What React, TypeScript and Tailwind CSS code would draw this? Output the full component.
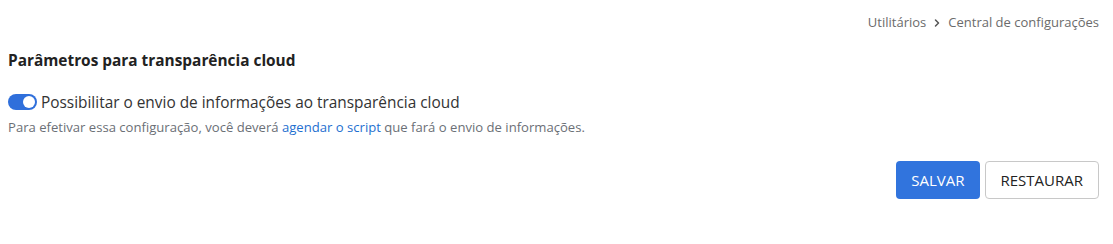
import { ChevronRight } from "lucide-react"

export default function App() {
  return (
    <div className="w-[1113px] h-[244px] bg-white px-2 font-['Open_Sans',sans-serif]">
      {/* Breadcrumb */}
      <div className="flex justify-end items-center pt-[13px] pr-[6px] text-[13px] text-[#6b6b6b]">
        <span>Utilitários</span>
        <ChevronRight className="w-3 h-3 mx-[5px] text-[#555]" strokeWidth={3} />
        <span>Central de configurações</span>
      </div>

      <h2 className="mt-[16px] text-[15.4px] font-bold text-[#222]">Parâmetros para transparência cloud</h2>

      <div className="mt-[19px] flex items-center gap-1">
        <button className="relative w-[29px] h-[16px] rounded-full bg-[#2f6fdb] shrink-0">
          <span className="absolute right-[2px] top-[2px] w-[12px] h-[12px] rounded-full bg-white" />
        </button>
        <span className="text-[15.4px] text-[#333]">Possibilitar o envio de informações ao transparência cloud</span>
      </div>
      <p className="mt-[4px] text-[13.1px] text-[#6b6f76]">
        Para efetivar essa configuração, você deverá{" "}
        <a className="text-[#1e6fd0]">agendar o script</a> que fará o envio de informações.
      </p>

      <div className="mt-[24px] flex justify-end gap-[5px] pr-[6px]">
        <button className="h-[38px] px-[15px] rounded-[4px] bg-[#3174dd] text-white text-[15px]">SALVAR</button>
        <button className="h-[38px] px-[15px] rounded-[4px] border border-[#c8c8c8] bg-white text-[#222] text-[15px]">RESTAURAR</button>
      </div>
    </div>
  )
}
